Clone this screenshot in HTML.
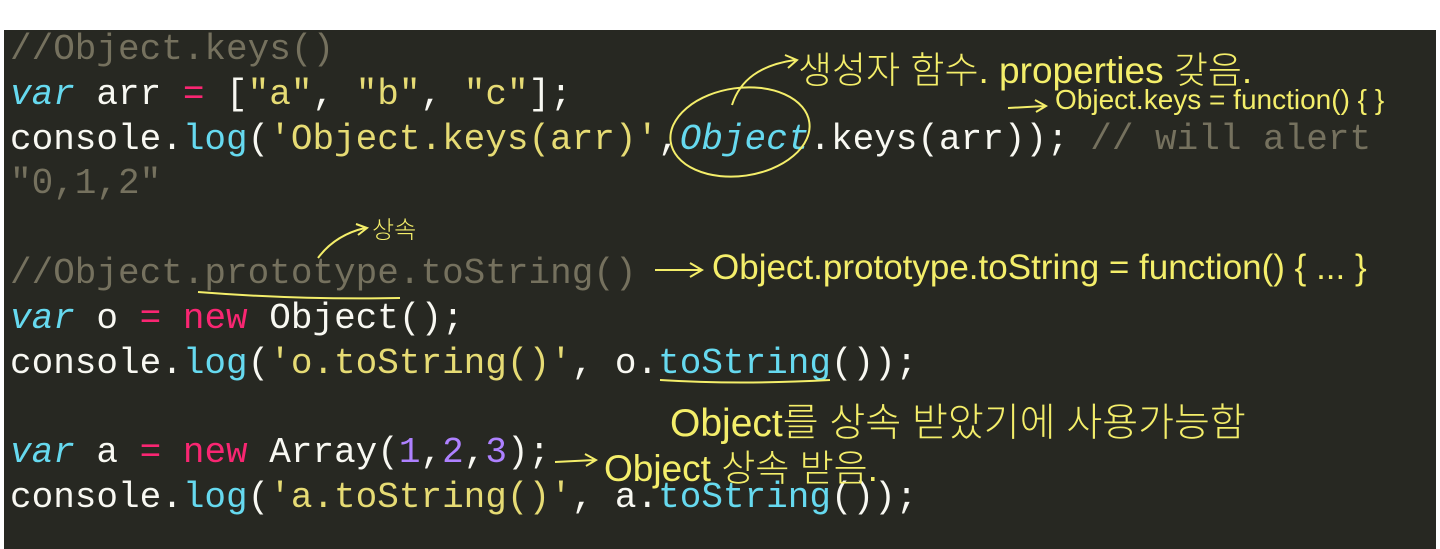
<!DOCTYPE html>
<html><head><meta charset="utf-8"><style>
html,body{margin:0;padding:0;width:1440px;height:549px;overflow:hidden;background:#fff;}
#bg{position:absolute;left:4px;top:30px;width:1432px;height:519px;background:#272822;}
pre{position:absolute;left:10px;top:28px;margin:0;font-family:"Liberation Mono",monospace;font-size:36px;line-height:44.8px;color:#f8f8f2;}
.c{color:#75715e}.k{color:#66d9ef;font-style:italic}.p{color:#f92672}.s{color:#e6db74}.f{color:#66d9ef}.n{color:#ae81ff}
.h{position:absolute;color:#f4ee6a;font-family:"Liberation Sans","Noto Sans CJK KR",sans-serif;font-weight:300;white-space:nowrap;}
</style></head><body>
<div id="bg"></div>
<pre><span class="c">//Object.keys()</span>
<span class="k">var</span> arr <span class="p">=</span> [<span class="s">"a"</span>, <span class="s">"b"</span>, <span class="s">"c"</span>];
console.<span class="f">log</span>(<span class="s">'Object.keys(arr)'</span>,<span class="k">Object</span>.keys(arr)); <span class="c">// will alert</span>
<span class="c">"0,1,2"</span>

<span class="c">//Object.prototype.toString()</span>
<span class="k">var</span> o <span class="p">=</span> <span class="p">new</span> Object();
console.<span class="f">log</span>(<span class="s">'o.toString()'</span>, o.<span class="f">toString</span>());

<span class="k">var</span> a <span class="p">=</span> <span class="p">new</span> Array(<span class="n">1</span>,<span class="n">2</span>,<span class="n">3</span>);
console.<span class="f">log</span>(<span class="s">'a.toString()'</span>, a.<span class="f">toString</span>());</pre>
<svg width="1440" height="549" style="position:absolute;left:0;top:0" fill="none" stroke="#f4ee6a" stroke-width="2">
<ellipse cx="740" cy="132" rx="70" ry="44" transform="rotate(-8 740 132)"/>
<path d="M732 105 C740 80 760 65 795 60 M785 55 L797 60 L788 68"/>
<path d="M1008 108 L1045 106 M1035 100 L1046 106 L1036 112"/>
<path d="M198 292 Q300 300 400 298"/>
<path d="M318 258 Q335 235 365 228 M356 224 L367 228 L358 235"/>
<path d="M655 270 L700 270 M690 263 L702 270 L690 277"/>
<path d="M660 380 Q740 385 830 380"/>
<path d="M555 462 L595 460 M585 454 L596 460 L586 466"/>
</svg>
<div class="h" style="left:798px;top:40px;font-size:37px">생성자 함수. properties 갖음.</div>
<div class="h" style="left:1055px;top:84px;font-size:28px">Object.keys = function() { }</div>
<div class="h" style="left:372px;top:210px;font-size:24px">상속</div>
<div class="h" style="left:712px;top:248px;font-size:35px">Object.prototype.toString = function() { ... }</div>
<div class="h" style="left:670px;top:392px;font-size:39px">Object를 상속 받았기에 사용가능함</div>
<div class="h" style="left:604px;top:438px;font-size:37px">Object 상속 받음.</div>
</body></html>
